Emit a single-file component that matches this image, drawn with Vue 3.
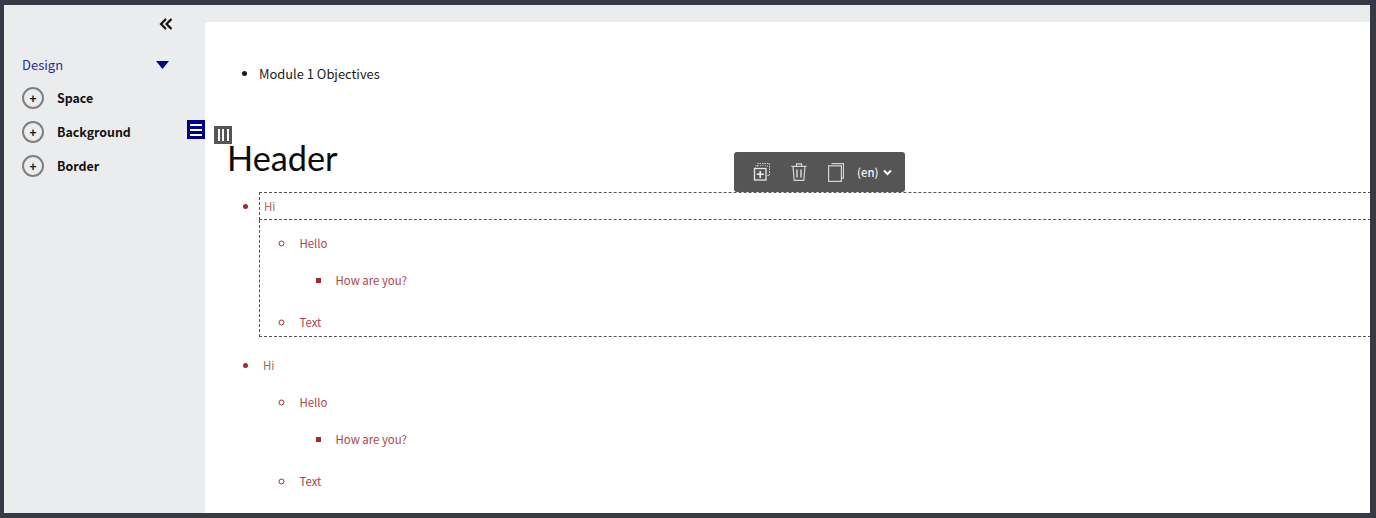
<script setup>
const rows = [{ id: 1, boxed: true }, { id: 2, boxed: false }]
const sections = ['Space', 'Background', 'Border']
</script>

<template>
  <div class="frame">
    <div class="workspace">
      <aside class="panel">
        <div class="collapse">
          <svg width="14" height="14" viewBox="0 0 14 14" fill="none" stroke="#111" stroke-width="2.2">
            <path d="M7 2 2 7l5 5M12.5 2l-5 5 5 5" />
          </svg>
        </div>
        <div class="design">
          <span>Design</span>
          <svg width="13" height="8" viewBox="0 0 13 8"><path d="M0 0h13L6.500 8z" fill="#00008f" /></svg>
        </div>
        <div v-for="s in sections" :key="s" class="section">
          <span class="plus">+</span>
          <span class="section-name">{{ s }}</span>
        </div>
      </aside>

      <main class="canvas">
        <ul class="objectives"><li>Module 1 Objectives</li></ul>
        <h1 class="header">Header</h1>

        <ul v-for="r in rows" :key="r.id" class="l1" :class="{ boxed: r.boxed }">
          <li>
            <div class="hi">Hi</div>
            <div class="sub">
              <ul class="l2">
                <li>
                  <div class="t hello">Hello</div>
                  <ul class="l3"><li><div class="t">How are you?</div></li></ul>
                </li>
                <li><div class="t last">Text</div></li>
              </ul>
            </div>
          </li>
        </ul>

        <button class="menu-handle" aria-label="Menu">
          <span></span><span></span><span></span>
        </button>
        <button class="col-handle" aria-label="Columns">
          <span></span><span></span><span></span>
        </button>

        <div class="toolbar">
          <svg width="18" height="18" viewBox="0 0 18 18" fill="none" stroke="#cfcfcf">
            <path stroke-dasharray="1.500 1" d="M5.500 3.500V.5h12v12h-3" />
            <path stroke-dasharray="1.500 1" d="M3.500 5.500V2.500h12v2" opacity=".6" />
            <rect x="2.500" y="5.500" width="11.500" height="11.500" stroke="#e6e6e6" stroke-width="1.300" />
            <path d="M8.200 8v7M4.800 11.300h7" stroke="#f2f2f2" stroke-width="1.500" />
          </svg>
          <svg width="16" height="18" viewBox="0 0 16 18" fill="none" stroke="#d4d4d4" stroke-width="1.200">
            <path d="M.3 3.300h15.400M5.500 3V.8h5V3M2 3.300l1.200 14h9.600l1.200-14" />
            <path d="M6 6.500v8M10 6.500v8" stroke-width="1.500" />
          </svg>
          <svg width="16" height="19" viewBox="0 0 16 19" fill="none" stroke="#d4d4d4" stroke-width="1.200">
            <path d="M3.500.6h12v14.500h-2" />
            <rect x=".6" y="2.800" width="12.800" height="15.600" />
          </svg>
          <span class="lang">(en)
            <svg width="9" height="7" viewBox="0 0 9 7" fill="none" stroke="#fff" stroke-width="2"><path d="M1 1.500 4.500 5 8 1.500" /></svg>
          </span>
        </div>
      </main>
    </div>
  </div>
</template>

<style>
html, body { margin: 0; background: #373a45; }
</style>

<style scoped>
.frame {
  width: 1376px;
  height: 518px;
  box-sizing: border-box;
  padding: 5px 6px 5px 4px;
  background: #373a45;
  overflow: hidden;
  font-family: "Noto Sans CJK SC", "Source Sans Pro", "Noto Sans", sans-serif;
}
.workspace {
  display: flex;
  height: 100%;
  background: #ebecee;
  overflow: hidden;
}
.panel {
  width: 201px;
  flex: none;
  padding: 0 0 0 18px;
  box-sizing: border-box;
}
.collapse { height: 14px; padding: 7px 0 0 137px; }
.design {
  margin-top: 28px;
  height: 22px;
  width: 147px;
  display: flex;
  align-items: center;
  justify-content: space-between;
  color: #1d2f9a;
  font-size: 13px;
  line-height: 22px;
}
.section { display: flex; align-items: center; height: 34px; }
.design + .section { margin-top: 5px; }
.plus {
  width: 22px;
  height: 22px;
  padding-top: 1px;
  box-sizing: border-box;
  border: 2px solid #808080;
  border-radius: 50%;
  display: flex;
  align-items: center;
  justify-content: center;
  font: 700 12px/1 "Liberation Sans", sans-serif;
  color: #111;
}
.section-name { margin-left: 13px; font-size: 12.400px; font-weight: 600; color: #111; }
.canvas {
  position: relative;
  flex: 1;
  margin-top: 17px;
  background: #fff;
  color: #222;
}
ul { margin: 0; padding: 0; }
.objectives {
  padding: 41px 0 0 54px;
  font-size: 12.900px;
  line-height: 22px;
  color: #1a1a1a;
}
.header {
  margin: 52px 0 0 22px;
  font: 400 34.300px/42px Lato, "Noto Sans", sans-serif;
  color: #0c0c0c;
}
.l1 {
  list-style: disc;
  color: #a32a2e;
  font-size: 12px;
  padding-left: 54px;
  margin-top: 13px;
}
.l1 + .l1 { margin-top: 14px; }
.hi {
  height: 28px;
  line-height: 28px;
  padding-left: 4px;
  color: #b06a5a;
  font-size: 11.500px;
  box-sizing: border-box;
}
.sub { box-sizing: border-box; height: 117px; }
.boxed .hi { border: 1px dashed #555; border-right: 0; margin-right: -1px; line-height: 26px; }
.boxed .sub { border: 1px dashed #555; border-top: 0; border-right: 0; margin-right: -1px; }
.l1:not(.boxed) .sub { padding-left: 1px; }
.l2 { list-style: circle; padding: 0 0 0 35px; }
.l3 { list-style: square; padding-left: 36.500px; }
.t { font-size: 11.400px; line-height: 18px; color: #a8474a; padding-left: 4.500px; }
.hello { padding-top: 14px; }
.l3 .t { padding-top: 19px; padding-left: 4px; }
.last { padding-top: 24px; }
.menu-handle, .col-handle {
  position: absolute;
  padding: 0;
  border: 0;
  display: flex;
}
.menu-handle {
  left: -18px;
  top: 98px;
  width: 18px;
  height: 19px;
  background: #00008f;
  flex-direction: column;
  justify-content: center;
  align-items: center;
  gap: 3px;
}
.menu-handle span { width: 12px; height: 2px; background: #fff; }
.col-handle {
  left: 9px;
  top: 104px;
  width: 18px;
  height: 18px;
  background: #555;
  justify-content: center;
  align-items: center;
  gap: 2.500px;
}
.col-handle span { width: 2px; height: 12px; background: #fff; }
.toolbar {
  position: absolute;
  left: 529px;
  top: 130px;
  width: 171px;
  height: 40px;
  box-sizing: border-box;
  padding: 0 0 0 18px;
  background: #555;
  border-radius: 3px;
  display: flex;
  align-items: center;
  gap: 21px;
}
.lang {
  margin-left: -8px;
  color: #f2f2f2;
  font-size: 11.300px;
  font-weight: 500;
  display: flex;
  align-items: center;
  gap: 4px;
}
</style>
